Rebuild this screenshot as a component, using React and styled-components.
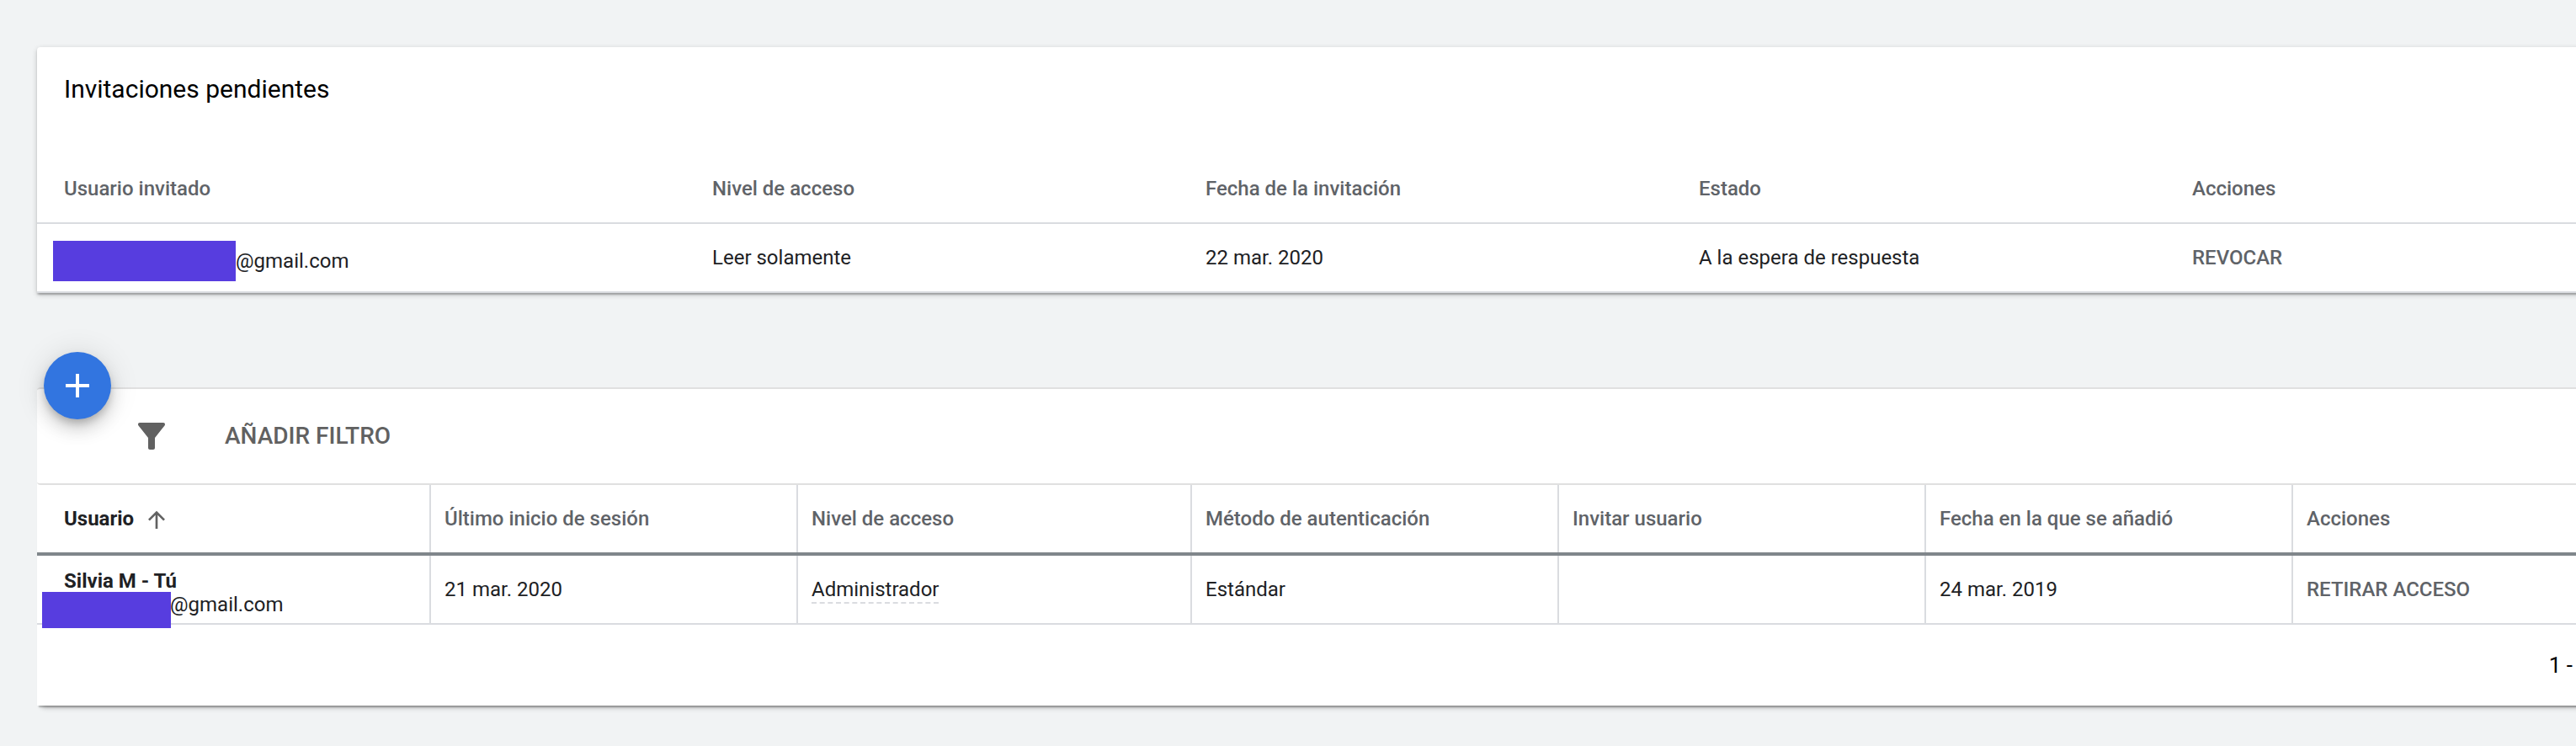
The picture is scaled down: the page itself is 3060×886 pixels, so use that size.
import React from 'react'
import styled, { createGlobalStyle } from 'styled-components'

const GlobalStyle = createGlobalStyle`
    body {
        margin: 0;
        background-color: #f1f3f4;
        font-family: Roboto, "Liberation Sans", sans-serif;
        overflow-x: hidden;
    }
    * {
        box-sizing: border-box;
    }
`

/* cards run past the right edge of the window */
const Page = styled.main`
    display: flex;
    flex-direction: column;
    gap: 112px;
    margin-right: -16px;
    padding: 56px 0 48px 44px;
`
const Card = styled.section`
    position: relative;
    background-color: white;
    border-top-left-radius: 4px;
    box-shadow: ${({ $flush }) => ($flush
      ? '0 8px 6px -6px rgba(0, 0, 0, 0.3), 0 4px 2px -2px rgba(0, 0, 0, 0.26)'
      : '0 2px 2px rgba(0, 0, 0, 0.14), 0 4px 2px -2px rgba(0, 0, 0, 0.12), 0 2px 6px rgba(0, 0, 0, 0.2)')};
`
const Title = styled.h2`
    margin: 0;
    padding: 32px 32px 60px;
    font-size: 30px;
    line-height: 36px;
    font-weight: 400;
    color: black;
`
const Table = styled.table`
    width: 100%;
    table-layout: fixed;
    border-collapse: separate;
    border-spacing: 0;
    font-size: 24px;
    line-height: 28px;
    color: #202124;
`
const Col = styled.col`
    width: ${({ $width }) => ($width ? `${$width}px` : 'auto')};
`
const HeadCell = styled.th`
    height: ${({ $grid }) => ($grid ? 84 : 82)}px;
    padding: 0 16px 0 ${({ $grid }) => ($grid ? 18 : 16)}px;
    text-align: left;
    font-weight: ${({ $sorted }) => ($sorted ? 700 : 500)};
    color: ${({ $sorted }) => ($sorted ? '#202124' : '#5f6368')};
    border-bottom: ${({ $grid }) => ($grid ? '4px solid #80868b' : '2px solid #dadce0')};
    box-shadow: ${({ $grid }) => ($grid ? 'inset 2px 0 #dadce0' : 'none')};

    &:first-child {
        padding-left: 32px;
        box-shadow: none;
    }
`
const Cell = styled.td`
    height: 82px;
    padding: 0 16px 0 ${({ $grid }) => ($grid ? 18 : 16)}px;
    border-bottom: 2px solid #dadce0;
    box-shadow: ${({ $grid }) => ($grid ? 'inset 2px 0 #dadce0' : 'none')};

    &:first-child {
        padding-left: ${({ $grid }) => ($grid ? 6 : 19)}px;
        box-shadow: none;
    }
`
const Invited = styled.div`
    display: flex;
    align-items: center;
    padding-top: 8px;
`
const Hidden = styled.span`
    width: ${({ $width }) => $width}px;
    height: ${({ $height }) => $height}px;
    background-color: #573ddf;
`
const SortButton = styled.button`
    display: flex;
    align-items: center;
    gap: 11px;
    padding: 0;
    border: none;
    background: none;
    font: inherit;
    color: inherit;
    cursor: pointer;
`
const ActionButton = styled.button`
    padding: 0;
    border: none;
    background: none;
    font: inherit;
    font-weight: 500;
    color: #5f6368;
    cursor: pointer;
`
const UserCell = styled.div`
    position: relative;
    display: flex;
    flex-direction: column;
    height: 80px;
    padding: 16px 0 0 26px;
`
const UserName = styled.strong`
    font-weight: 700;
`
/* the block lies over the bottom border of the row */
const UserMask = styled(Hidden)`
    position: absolute;
    left: 0;
    top: 43px;
`
const UserMail = styled.span`
    padding-left: 126px;
`
const Level = styled.span`
    padding-bottom: 1px;
    border-bottom: 2px dashed #dadce0;
`
const Fab = styled.button`
    position: absolute;
    left: 8px;
    top: -42px;
    width: 80px;
    height: 80px;
    display: flex;
    align-items: center;
    justify-content: center;
    padding: 0;
    border: none;
    border-radius: 50%;
    background-color: #3275e0;
    box-shadow: 0 6px 10px -2px rgba(0, 0, 0, 0.2), 0 12px 20px rgba(0, 0, 0, 0.14), 0 2px 36px rgba(0, 0, 0, 0.12);
    color: white;
    cursor: pointer;
`
const FilterBar = styled.div`
    display: flex;
    align-items: center;
    gap: 63px;
    height: 116px;
    padding-left: 112px;
    border: 2px solid #e0e0e0;
    border-left: none;
    border-right: none;
    border-radius: 4px 0 0 4px;
    color: #616161;
`
const FilterButton = styled.button`
    padding: 0;
    border: none;
    background: none;
    font: inherit;
    font-size: 28px;
    line-height: 32px;
    font-weight: 500;
    color: inherit;
    cursor: pointer;
`
const Footer = styled.footer`
    display: flex;
    justify-content: flex-end;
    align-items: center;
    height: 96px;
    padding-right: 20px;
    font-size: 26px;
    line-height: 32px;
    color: black;
`

const PlusIcon = () => (
  <svg width="28" height="28" viewBox="0 0 28 28" fill="currentColor" aria-hidden="true">
    <path d="M12 0h4v12h12v4H16v12h-4V16H0v-4h12z" />
  </svg>
)

const FilterIcon = () => (
  <svg width="48" height="48" viewBox="0 0 24 24" fill="currentColor" aria-hidden="true">
    <path d="M5 4h14c.9 0 1.3 1 .75 1.7L14 13v6c0 .55-.45 1-1 1h-2c-.55 0-1-.45-1-1v-6L4.25 5.7C3.7 5 4.1 4 5 4z" />
  </svg>
)

const ArrowIcon = () => (
  <svg width="32" height="32" viewBox="0 0 24 24" fill="#616161" aria-hidden="true">
    <path d="M4.5 12.5l1.4 1.4L11 8.8V21h2V8.8l5.1 5.1 1.4-1.4L12 5z" />
  </svg>
)

const inviteHeads = ['Nivel de acceso', 'Fecha de la invitación', 'Estado', 'Acciones']
const userHeads = [
  'Último inicio de sesión',
  'Nivel de acceso',
  'Método de autenticación',
  'Invitar usuario',
  'Fecha en la que se añadió',
  'Acciones',
]

const Invitations = () => (
  <Card>
    <Title>Invitaciones pendientes</Title>
    <Table>
      <colgroup>
        {[786, 586, 586, 586, 0].map((width, i) => <Col key={i} $width={width} />)}
      </colgroup>
      <thead>
        <tr>
          <HeadCell>Usuario invitado</HeadCell>
          {inviteHeads.map((head) => <HeadCell key={head}>{head}</HeadCell>)}
        </tr>
      </thead>
      <tbody>
        <tr>
          <Cell>
            <Invited>
              <Hidden $width={217} $height={48} />
              @gmail.com
            </Invited>
          </Cell>
          <Cell>Leer solamente</Cell>
          <Cell>22 mar. 2020</Cell>
          <Cell>A la espera de respuesta</Cell>
          <Cell><ActionButton>REVOCAR</ActionButton></Cell>
        </tr>
      </tbody>
    </Table>
  </Card>
)

const Users = () => (
  <Card $flush>
    <FilterBar>
      <FilterIcon />
      <FilterButton>AÑADIR FILTRO</FilterButton>
    </FilterBar>
    <Table>
      <colgroup>
        {[466, 436, 468, 436, 436, 436, 0].map((width, i) => <Col key={i} $width={width} />)}
      </colgroup>
      <thead>
        <tr>
          <HeadCell $grid $sorted aria-sort="ascending">
            <SortButton>Usuario <ArrowIcon /></SortButton>
          </HeadCell>
          {userHeads.map((head) => <HeadCell $grid key={head}>{head}</HeadCell>)}
        </tr>
      </thead>
      <tbody>
        <tr>
          <Cell $grid>
            <UserCell>
              <UserName>Silvia M - Tú</UserName>
              <UserMask $width={153} $height={43} />
              <UserMail>@gmail.com</UserMail>
            </UserCell>
          </Cell>
          <Cell $grid>21 mar. 2020</Cell>
          <Cell $grid><Level>Administrador</Level></Cell>
          <Cell $grid>Estándar</Cell>
          <Cell $grid />
          <Cell $grid>24 mar. 2019</Cell>
          <Cell $grid><ActionButton>RETIRAR ACCESO</ActionButton></Cell>
        </tr>
      </tbody>
    </Table>
    <Footer>1 -</Footer>
    <Fab aria-label="Añadir usuario"><PlusIcon /></Fab>
  </Card>
)

const App = () => {
  return (
    <>
      <GlobalStyle />
      <Page>
        <Invitations />
        <Users />
      </Page>
    </>
  )
}

export default App
